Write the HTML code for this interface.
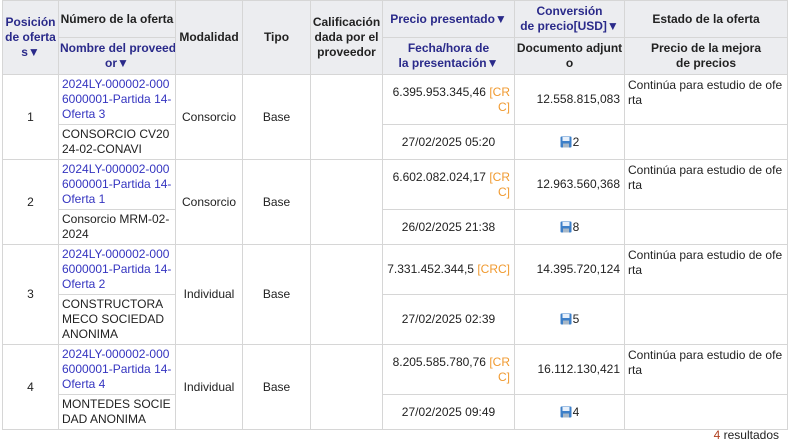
<!DOCTYPE html>
<html><head><meta charset="utf-8"><style>
body{margin:0;background:#fff;font-family:"Liberation Sans",Arial,sans-serif;font-size:12px;color:#222;}
table{position:absolute;left:2px;top:0;border-collapse:collapse;table-layout:fixed;width:785px;}
td,th{border:1px solid #d6d6d6;padding:0 3px;line-height:15px;word-break:break-all;overflow:hidden;}
th{background:#ecedf0;font-weight:bold;color:#222;text-align:center;white-space:nowrap;word-break:normal;padding:0 1px;}
th.b{color:#2a2a8a;}
td.c{text-align:center}
td.r{text-align:right;padding-right:4px}
a{color:#3535c0;text-decoration:none}
.o{color:#f09a30}
.ic{display:inline-block;width:12px;height:12px;vertical-align:-2px;margin-right:1px}
.res{position:absolute;right:10px;top:428px;font-size:12px;color:#222}
.res span{color:#b04020}
</style></head><body>
<table>
<colgroup><col style="width:56px"><col style="width:117px"><col style="width:67px"><col style="width:68px"><col style="width:72px"><col style="width:132px"><col style="width:110px"><col style="width:163px"></colgroup>
<tr style="height:37px"><th rowspan="2" class="b">Posición<br>de oferta<br>s▼</th><th>Número de la oferta</th><th rowspan="2">Modalidad</th><th rowspan="2">Tipo</th><th rowspan="2">Calificación<br>dada por el<br>proveedor</th><th class="b">Precio presentado▼</th><th class="b">Conversión<br>de precio[USD]▼</th><th>Estado de la oferta</th></tr>
<tr style="height:37px"><th class="b">Nombre del proveed<br>or▼</th><th class="b">Fecha/hora de<br>la presentación▼</th><th>Documento adjunt<br>o</th><th>Precio de la mejora<br>de precios</th></tr>

<tr style="height:50px"><td rowspan="2" class="c">1</td><td><a>2024LY-000002-0006000001-Partida 14-Oferta 3</a></td><td rowspan="2" class="c">Consorcio</td><td rowspan="2" class="c">Base</td><td rowspan="2"></td><td class="r">6.395.953.345,46 <span class="o">[CRC]</span></td><td class="r">12.558.815,083</td><td style="vertical-align:top;padding-top:3px">Continúa para estudio de oferta</td></tr>
<tr style="height:35px"><td>CONSORCIO CV2024-02-CONAVI</td><td class="c">27/02/2025 05:20</td><td class="c"><svg class="ic" viewBox="0 0 12 12"><rect x="0.5" y="0.5" width="11" height="11" rx="1" fill="#3d7fc8"/><rect x="2.5" y="1" width="7" height="4" fill="#e8f0fa"/><rect x="3" y="7.5" width="6" height="4" fill="#a8b8c8"/></svg>2</td><td></td></tr>

<tr style="height:50px"><td rowspan="2" class="c">2</td><td><a>2024LY-000002-0006000001-Partida 14-Oferta 1</a></td><td rowspan="2" class="c">Consorcio</td><td rowspan="2" class="c">Base</td><td rowspan="2"></td><td class="r">6.602.082.024,17 <span class="o">[CRC]</span></td><td class="r">12.963.560,368</td><td style="vertical-align:top;padding-top:3px">Continúa para estudio de oferta</td></tr>
<tr style="height:35px"><td>Consorcio MRM-02-2024</td><td class="c">26/02/2025 21:38</td><td class="c"><svg class="ic" viewBox="0 0 12 12"><rect x="0.5" y="0.5" width="11" height="11" rx="1" fill="#3d7fc8"/><rect x="2.5" y="1" width="7" height="4" fill="#e8f0fa"/><rect x="3" y="7.5" width="6" height="4" fill="#a8b8c8"/></svg>8</td><td></td></tr>

<tr style="height:50px"><td rowspan="2" class="c">3</td><td><a>2024LY-000002-0006000001-Partida 14-Oferta 2</a></td><td rowspan="2" class="c">Individual</td><td rowspan="2" class="c">Base</td><td rowspan="2"></td><td class="r">7.331.452.344,5 <span class="o">[CRC]</span></td><td class="r">14.395.720,124</td><td style="vertical-align:top;padding-top:3px">Continúa para estudio de oferta</td></tr>
<tr style="height:50px"><td>CONSTRUCTORA MECO SOCIEDAD ANONIMA</td><td class="c">27/02/2025 02:39</td><td class="c"><svg class="ic" viewBox="0 0 12 12"><rect x="0.5" y="0.5" width="11" height="11" rx="1" fill="#3d7fc8"/><rect x="2.5" y="1" width="7" height="4" fill="#e8f0fa"/><rect x="3" y="7.5" width="6" height="4" fill="#a8b8c8"/></svg>5</td><td></td></tr>

<tr style="height:50px"><td rowspan="2" class="c">4</td><td><a>2024LY-000002-0006000001-Partida 14-Oferta 4</a></td><td rowspan="2" class="c">Individual</td><td rowspan="2" class="c">Base</td><td rowspan="2"></td><td class="r">8.205.585.780,76 <span class="o">[CRC]</span></td><td class="r">16.112.130,421</td><td style="vertical-align:top;padding-top:3px">Continúa para estudio de oferta</td></tr>
<tr style="height:35px"><td>MONTEDES SOCIEDAD ANONIMA</td><td class="c">27/02/2025 09:49</td><td class="c"><svg class="ic" viewBox="0 0 12 12"><rect x="0.5" y="0.5" width="11" height="11" rx="1" fill="#3d7fc8"/><rect x="2.5" y="1" width="7" height="4" fill="#e8f0fa"/><rect x="3" y="7.5" width="6" height="4" fill="#a8b8c8"/></svg>4</td><td></td></tr>
</table>
<div class="res"><span>4</span> resultados</div>
</body></html>
